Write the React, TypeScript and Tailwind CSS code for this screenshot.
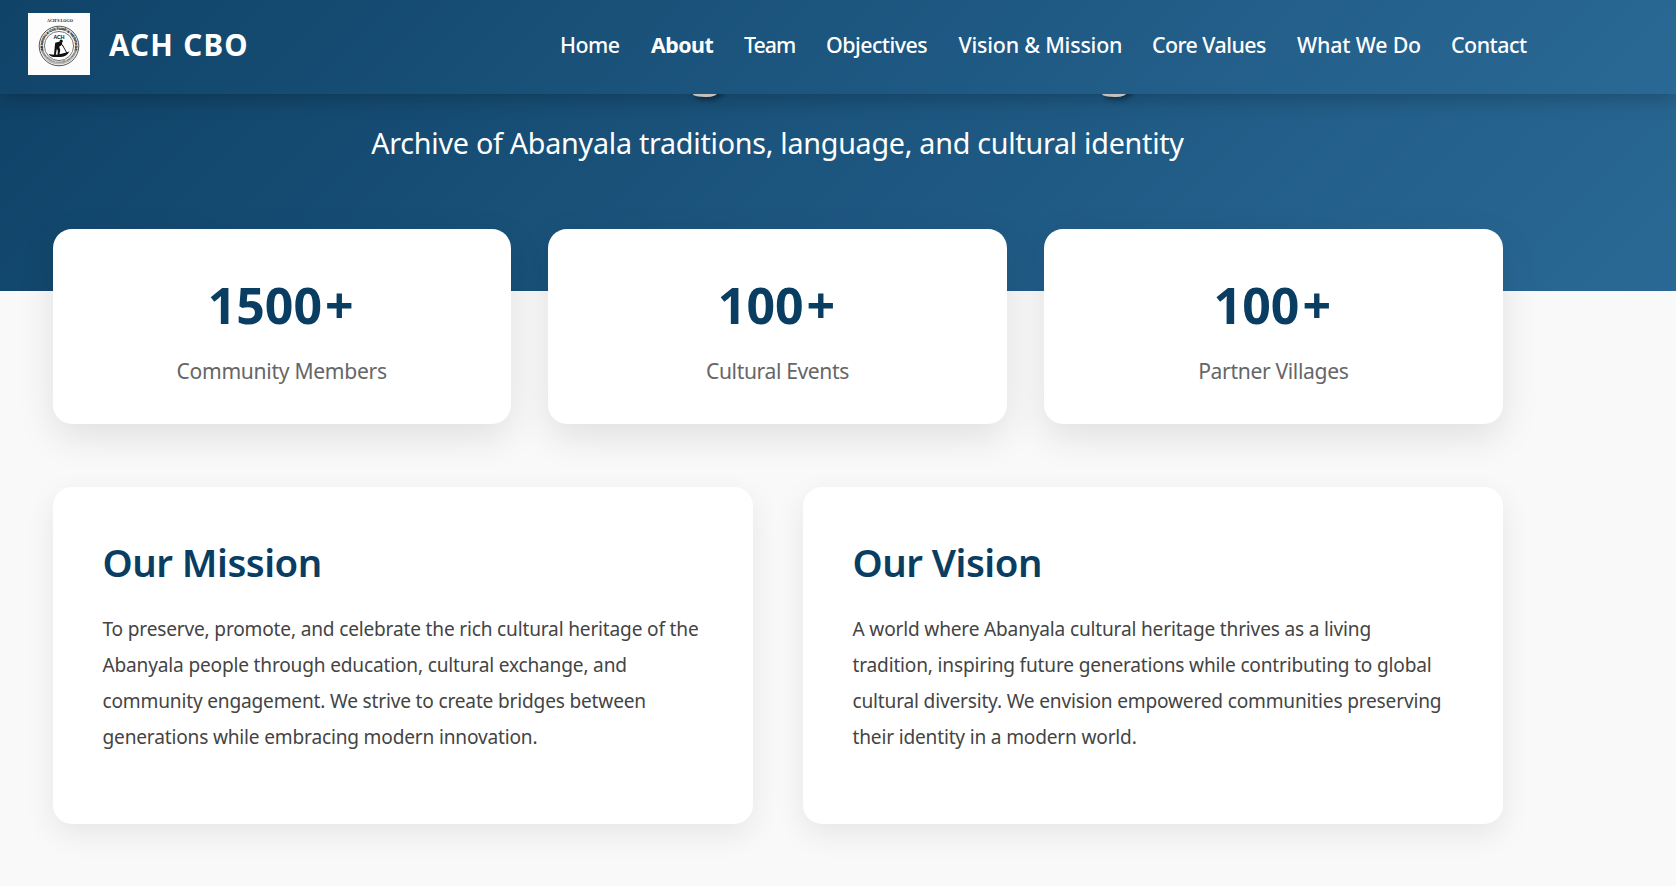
import React from "react";

const NAV = [
  { label: "Home", cls: "w-[60px] tracking-[-0.5px] font-medium" },
  { label: "About", cls: "w-[62px] tracking-[-0.55px] font-bold" },
  { label: "Team", cls: "w-[51px] tracking-[-1px] font-medium" },
  { label: "Objectives", cls: "w-[101.5px] tracking-[-0.55px] font-medium" },
  { label: "Vision & Mission", cls: "w-[162.5px] tracking-[-0.2px] font-medium" },
  { label: "Core Values", cls: "w-[114px] tracking-[-0.55px] font-medium" },
  { label: "What We Do", cls: "w-[123px] tracking-[-0.18px] font-medium" },
  { label: "Contact", cls: "w-[77px] tracking-[-0.5px] font-medium" },
];

const STATS = [
  { value: "1500", label: "Community Members", cls: "tracking-[-0.3px]" },
  { value: "100", label: "Cultural Events", cls: "tracking-[-0.37px]" },
  { value: "100", label: "Partner Villages", cls: "tracking-[-0.35px]" },
];

const PANELS = [
  {
    title: "Our Mission",
    lines: [
      "To preserve, promote, and celebrate the rich cultural heritage of the",
      "Abanyala people through education, cultural exchange, and",
      "community engagement. We strive to create bridges between",
      "generations while embracing modern innovation.",
    ],
  },
  {
    title: "Our Vision",
    lines: [
      "A world where Abanyala cultural heritage thrives as a living",
      "tradition, inspiring future generations while contributing to global",
      "cultural diversity. We envision empowered communities preserving",
      "their identity in a modern world.",
    ],
  },
];

function Logo() {
  return (
    <svg viewBox="0 0 62 62" className="h-[62px] w-[62px] shrink-0 bg-[#fdfdfd]">
      <defs>
        <path id="ring-top" d="M15.4 36.5 A16 16 0 1 1 46.6 36.5" />
        <path id="ring-bottom" d="M12.8 34 A18.4 18.4 0 0 0 49.2 34" />
      </defs>
      <text x="32" y="9.3" textAnchor="middle" fontSize="4.1" fontWeight="700" fontFamily="Liberation Serif, serif" fill="#111">
        ACH'S LOGO
      </text>
      <circle cx="31" cy="33" r="19.8" fill="none" stroke="#555" strokeWidth="1" />
      <circle cx="31" cy="33" r="17.4" fill="none" stroke="#bbb" strokeWidth="2.4" />
      <circle cx="31" cy="33" r="14.6" fill="none" stroke="#666" strokeWidth="0.9" />
      <text fontSize="3.5" fontWeight="700" fontFamily="Liberation Sans, sans-serif" fill="#000">
        <textPath href="#ring-top" startOffset="50%" textAnchor="middle">ABANYALA CULTURE &amp; HERITAGE</textPath>
      </text>
      <text fontSize="2.2" fontWeight="700" fontFamily="Liberation Sans, sans-serif" fill="#444">
        <textPath href="#ring-bottom" startOffset="50%" textAnchor="middle">ORGANIZATION OF CULTURE AND HERITAGE</textPath>
      </text>
      <text x="31" y="25.6" textAnchor="middle" fontSize="5.2" fontWeight="700" fontFamily="Liberation Sans, sans-serif" fill="#111">
        ACH
      </text>
      <circle cx="33.2" cy="28" r="1.6" fill="#111" />
      <path d="M27.2 29.8 L31.8 28.4 L34.4 29.6 L33.6 32 L31.2 33.8 L32.2 37 L31.4 42 L29.6 42 L29.8 37.6 L28.8 36 L27.8 42 L26 42 L26.6 35 Z" fill="#111" />
      <path d="M32.5 30.5 L35.4 33.4 M34.2 31.6 L39.2 40.6" fill="none" stroke="#111" strokeWidth="0.9" />
      <path d="M20.8 41 Q29 43.2 41.4 38.6 Q38.6 43.8 33 44 L26 44 Q22 43.6 20.8 41 Z" fill="#111" />
    </svg>
  );
}

export default function App() {
  return (
    <div className="h-[886px] w-full overflow-hidden bg-[#f9f9f9] font-['Noto_Sans',sans-serif]">
      <header className="relative z-10 flex h-[94px] items-start bg-[linear-gradient(135deg,#104368_0%,#1f5a84_60%,#2a6995_100%)] pl-7 pt-[13px] text-white shadow-[0_4px_20px_rgba(0,0,0,0.25)]">
        <Logo />
        <div className="ml-[19px] w-[160px] whitespace-nowrap pt-px text-[29.5px] font-bold leading-[62px] tracking-[1.3px]">ACH CBO</div>
        <nav className="ml-[291px] flex gap-[31px] whitespace-nowrap text-[21.4px] leading-[64px]">
          {NAV.map((item) => (
            <a key={item.label} className={item.cls}>
              {item.label}
            </a>
          ))}
        </nav>
      </header>

      <section className="h-[197px] overflow-hidden bg-[linear-gradient(135deg,#104368_0%,#1f5a84_60%,#2a6995_100%)] text-center text-white">
        <div className="w-[1555px]">
          <h1 className="-mt-[79px] whitespace-nowrap text-[60px] font-bold leading-[90px] tracking-[3.2px] text-[#e8e4e0] [text-shadow:2.5px_2.5px_5px_rgba(0,0,0,0.4)]">
            Preserving Our Heritage
          </h1>
          <p className="mt-[17px] whitespace-nowrap text-[28.7px] leading-[42px] tracking-[-0.26px]">
            Archive of Abanyala traditions, language, and cultural identity
          </p>
        </div>
      </section>

      <main className="relative ml-[52.5px] -mt-[62px] w-[1450px]">
        <div className="grid grid-cols-3 gap-[37.5px]">
          {STATS.map((s, i) => (
            <div key={i} className="h-[195px] rounded-[19px] bg-white pt-[42px] text-center shadow-[0_12.5px_37.5px_rgba(0,0,0,0.1)]">
              <div className="pr-[2px] text-[50px] font-bold leading-[68px] text-[#0a3d62]">
                {s.value}
                <span className="ml-[3px]">+</span>
              </div>
              <div className={`mt-[15px] text-[21.1px] leading-[34px] text-[#666] ${s.cls}`}>{s.label}</div>
            </div>
          ))}
        </div>
        <div className="mt-[63px] grid grid-cols-2 gap-[50px]">
          {PANELS.map((p) => (
            <div key={p.title} className="h-[337px] rounded-[19px] bg-white px-[50px] pt-[49px] shadow-[0_10px_31px_rgba(0,0,0,0.08)]">
              <h2 className="text-[38.4px] font-semibold leading-[52px] tracking-[-0.5px] text-[#0a3d62]">{p.title}</h2>
              <p className="mt-[23px] whitespace-nowrap text-[19.1px] leading-[36px] tracking-[-0.18px] text-[#444]">
                {p.lines.map((line) => (
                  <span key={line} className="block">
                    {line}
                  </span>
                ))}
              </p>
            </div>
          ))}
        </div>
      </main>
    </div>
  );
}
